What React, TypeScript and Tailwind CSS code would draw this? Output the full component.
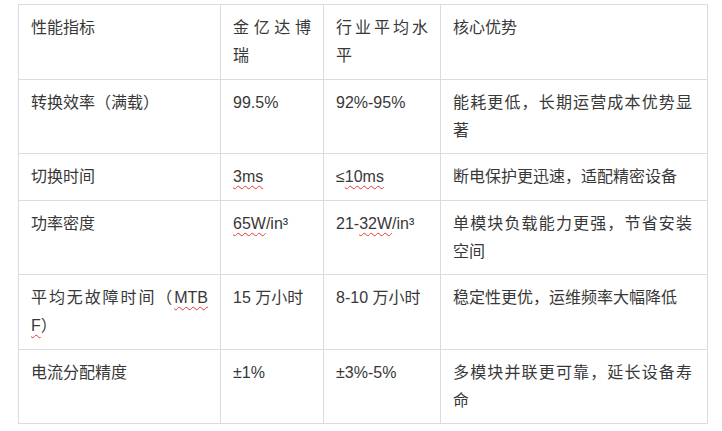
import React from 'react'

type Cell = React.ReactNode

const Sp = ({ children }: { children: React.ReactNode }) => (
  <span className="underline decoration-wavy decoration-[#e53935] decoration-1 underline-offset-[3px]">{children}</span>
)

const rows: Cell[][] = [
  ['性能指标', '金亿达博瑞', '行业平均水平', '核心优势'],
  ['转换效率（满载）', '99.5%', '92%-95%', '能耗更低，长期运营成本优势显著'],
  ['切换时间', <Sp>3ms</Sp>, <>≤<Sp>10ms</Sp></>, '断电保护更迅速，适配精密设备'],
  ['功率密度', <><Sp>65W</Sp>/in³</>, <>21-<Sp>32W</Sp>/in³</>, '单模块负载能力更强，节省安装空间'],
  [<>平均无故障时间（<Sp>MTB</Sp><Sp>F</Sp>）</>, '15 万小时', '8-10 万小时', '稳定性更优，运维频率大幅降低'],
  ['电流分配精度', '±1%', '±3%-5%', '多模块并联更可靠，延长设备寿命'],
]

export default function App() {
  return (
    <div className="w-[722px] h-[431px] bg-white pt-[4px] pl-[18px] overflow-hidden">
      <table
        className="table-fixed border-collapse w-[689px] text-[16px] leading-[28px] text-[#383838] text-justify break-all"
        style={{ fontFamily: '"Liberation Sans", "Noto Sans CJK SC", sans-serif' }}
      >
        <colgroup>
          <col className="w-[202px]" />
          <col className="w-[103px]" />
          <col className="w-[117px]" />
          <col className="w-[267px]" />
        </colgroup>
        <tbody>
          {rows.map((r, i) => (
            <tr key={i}>
              {r.map((c, j) => (
                <td
                  key={j}
                  className={
                    j === 3
                      ? 'border border-[#dcdcdc] align-top pt-[9px] pb-[8.5px] pl-[12px] pr-[15px]'
                      : 'border border-[#dcdcdc] align-top pt-[9px] pb-[8.5px] px-[12px]'
                  }
                >
                  {c}
                </td>
              ))}
            </tr>
          ))}
        </tbody>
      </table>
    </div>
  )
}
